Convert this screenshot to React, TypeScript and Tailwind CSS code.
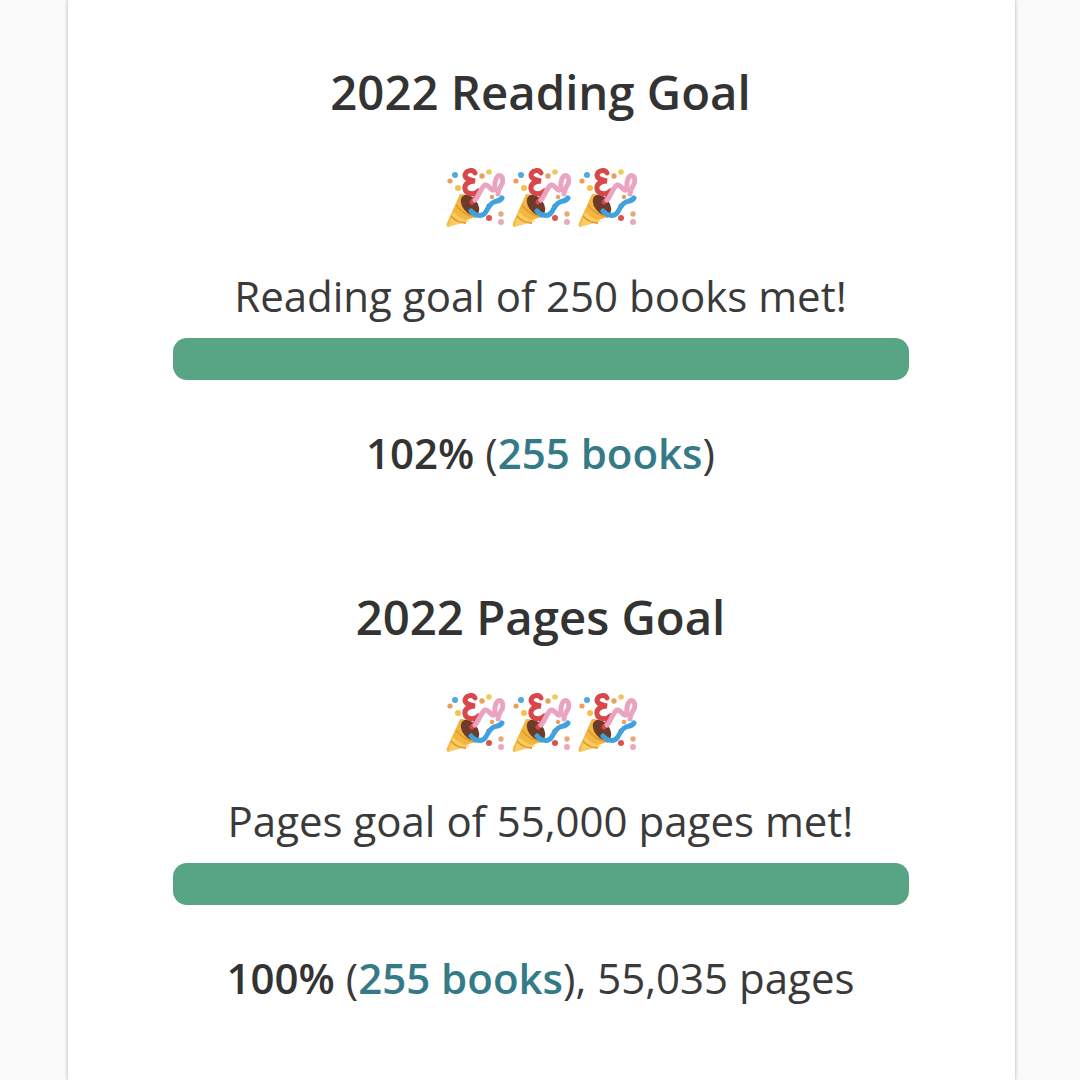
const dots: [number, number, number, string][] = [
  [10, 7, 3, "#4fa8e0"],
  [5, 13, 2.6, "#e8a05c"],
  [13, 20, 3, "#f4c04e"],
  [37, 8, 2.7, "#e8a05c"],
  [44, 4, 2.8, "#f0c95c"],
  [47, 29, 2.2, "#e8a05c"],
  [44, 38, 2.6, "#d9534f"],
  [44, 50, 3, "#d9534f"],
  [56, 46, 2.7, "#e8a878"],
  [56, 54, 3, "#eda6c0"],
];

function Popper() {
  return (
    <svg viewBox="0 0 60 60" className="w-[60px] h-[60px] shrink-0">
      {dots.map((d, i) => (
        <circle key={i} cx={d[0]} cy={d[1]} r={d[2]} fill={d[3]} />
      ))}
      <path d="M3 59 Q1 58 2 55 L15 26 Q30 26 35 47 Z" fill="#f3b63f" />
      <path d="M3 59 L8 44 Q16 52 25 53 Z" fill="#f8cd63" />
      <path d="M11 37 Q18 47 31 49 M6 48 Q12 55 21 55" stroke="#e29c2e" strokeWidth="1.8" fill="none" />
      <ellipse cx="25" cy="37" rx="7.5" ry="11.5" transform="rotate(-38 25 37)" fill="#6d3b2a" />
      <path d="M30 5 C28 1 21 2 20 7 C20 11 25 12 30 13 C24 13 19 16 20 21 C21 26 28 27 32 24 C33 28 30 31 27 34" stroke="#d9474a" strokeWidth="5" fill="none" strokeLinecap="round" />
      <path d="M30 32 C34 28 36 19 40 17 C44 16 46 24 49 22 C51 20 48 12 53 8 C57 6 59 12 57 16 C55 20 53 22 53 26" stroke="#eba4c0" strokeWidth="5" fill="none" strokeLinecap="round" />
      <path d="M26 43 C30 48 37 49 40 45 C43 41 44 36 49 34 C52 33 55 33 57 30" stroke="#3ea2e0" strokeWidth="5" fill="none" strokeLinecap="round" />
    </svg>
  );
}

function Goal({ title, text, pct, tail }: { title: string; text: string; pct: string; tail?: string }) {
  return (
    <section className="flex flex-col items-center">
      <h2 className="h-[62px] text-[47.3px] leading-[60px] font-semibold">{title}</h2>
      <div className="mt-[44px] flex gap-[6px]">
        <Popper />
        <Popper />
        <Popper />
      </div>
      <p className="mt-[39px] h-[58px] text-[42px] leading-[58px] font-normal text-[#3a3a3a]">{text}</p>
      <div className="mt-[13px] w-[736px] h-[42px] rounded-[14px] bg-[#58a586]" />
      <p className="mt-[43px] h-[58px] text-[42px] leading-[60px] font-normal text-[#3a3a3a]">
        <b className="font-semibold text-[#333333]">{pct}</b> (<span className="font-semibold text-[#357b87]">255 books</span>){tail}
      </p>
    </section>
  );
}

export default function App() {
  return (
    <main className="w-[1080px] h-[1080px] overflow-hidden bg-[#fafafa] font-['Open_Sans',sans-serif] text-[#333333]">
      <div className="ml-[68px] w-[947px] pr-[2px] h-[1080px] bg-white shadow-[0_0_4px_rgba(0,0,0,0.3)] pt-[62px] flex flex-col gap-[106px]">
        <Goal title="2022 Reading Goal" text="Reading goal of 250 books met!" pct="102%" />
        <Goal title="2022 Pages Goal" text="Pages goal of 55,000 pages met!" pct="100%" tail=", 55,035 pages" />
      </div>
    </main>
  );
}
